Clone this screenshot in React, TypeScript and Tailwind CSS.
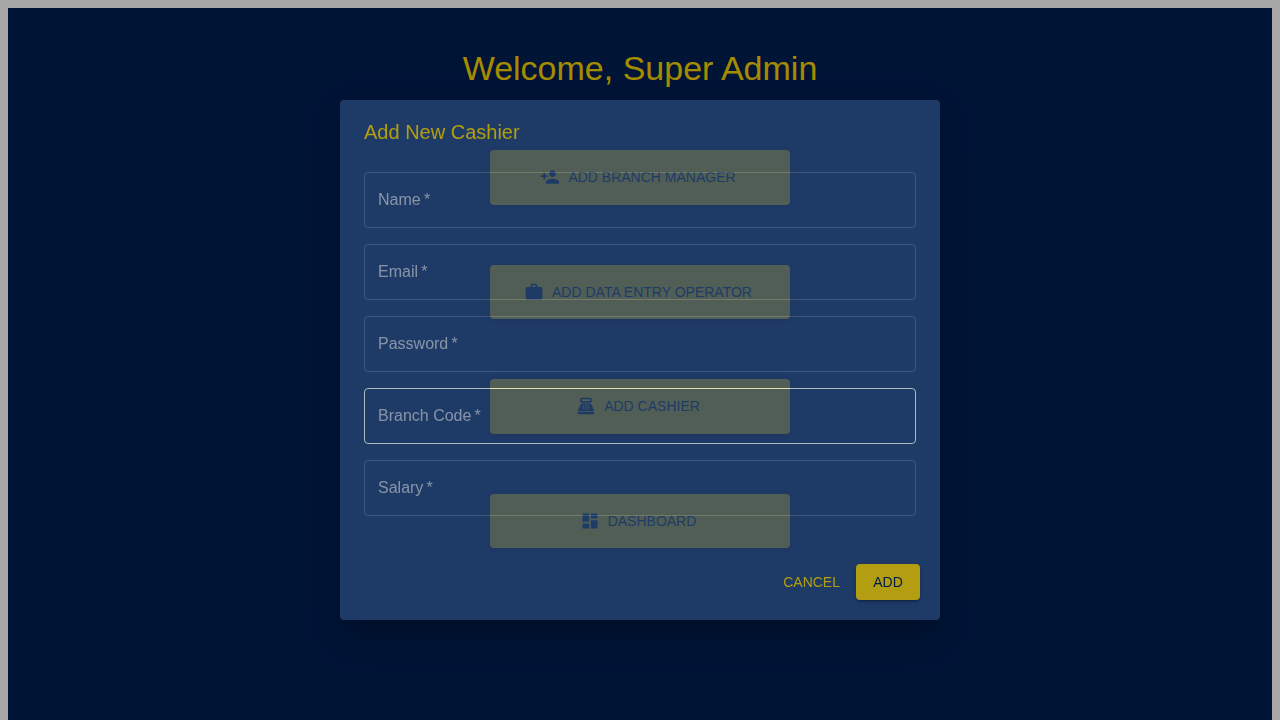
import { useState } from 'react';
import type { FormEvent } from 'react';
import type { IconType } from 'react-icons';
import { MdDashboard, MdPersonAdd, MdPointOfSale, MdWork } from 'react-icons/md';

const actions: { label: string; icon: IconType }[] = [
  { label: 'Add Branch Manager', icon: MdPersonAdd },
  { label: 'Add Data Entry Operator', icon: MdWork },
  { label: 'Add Cashier', icon: MdPointOfSale },
  { label: 'Dashboard', icon: MdDashboard },
];

const raised =
  'shadow-[0_3px_1px_-2px_rgba(0,0,0,0.2),0_2px_2px_0_rgba(0,0,0,0.14),0_1px_5px_0_rgba(0,0,0,0.12)]';

type FieldProps = { id: string; label: string; type?: string; active?: boolean };

function Field({ id, label, type = 'text', active = false }: FieldProps) {
  const [value, setValue] = useState('');
  return (
    <div className="relative">
      <input
        id={id}
        type={type}
        required
        value={value}
        onChange={(e) => setValue(e.target.value)}
        className={`block h-14 w-full rounded border bg-transparent px-[13px] text-base text-white outline-none hover:border-white focus:border-[#ffd700] ${
          active ? 'border-white' : 'border-white/23'
        }`}
      />
      {value === '' && (
        <label
          htmlFor={id}
          className="pointer-events-none absolute inset-y-0 left-3.5 flex items-center text-base text-white/70"
        >
          {label}&thinsp;*
        </label>
      )}
    </div>
  );
}

function CashierDialog() {
  const submit = (e: FormEvent) => e.preventDefault();
  return (
    <div className="fixed inset-0 flex items-center justify-center p-8 opacity-70">
      <form
        role="dialog"
        aria-labelledby="dialog-title"
        noValidate
        onSubmit={submit}
        className="w-full max-w-[600px] rounded bg-[#2b4a7b] shadow-[0_11px_15px_-7px_rgba(0,0,0,0.2),0_24px_38px_3px_rgba(0,0,0,0.14),0_9px_46px_8px_rgba(0,0,0,0.12)]"
      >
        <h2 id="dialog-title" className="px-6 py-4 text-xl leading-8 text-[#ffd700]">
          Add New Cashier
        </h2>
        <div className="flex flex-col gap-4 px-6 pt-2 pb-7">
          <Field id="name" label="Name" />
          <Field id="email" label="Email" type="email" />
          <Field id="password" label="Password" type="password" />
          <Field id="branch-code" label="Branch Code" active />
          <Field id="salary" label="Salary" type="number" />
        </div>
        <div className="flex justify-end gap-2 p-5">
          <button type="button" className="h-9 rounded px-2 text-sm text-[#ffd700] uppercase">
            Cancel
          </button>
          <button
            type="submit"
            className={`h-9 min-w-16 rounded bg-[#ffd700] px-4 text-sm text-[#001f54] uppercase ${raised}`}
          >
            Add
          </button>
        </div>
      </form>
    </div>
  );
}

export default function App() {
  return (
    <div className="bg-white px-2 pt-2 font-['Liberation_Sans',Arial,sans-serif]">
      <main className="flex min-h-[calc(100vh-8px)] flex-col items-center gap-15 bg-[#001f54] px-6 pt-10">
        <h1 className="pb-0.5 text-center text-[34px] leading-10 text-[#ffd700]">Welcome, Super Admin</h1>
        <div className="grid h-[398px] w-full max-w-[300px] grid-rows-4 gap-15">
          {actions.map(({ label, icon: Icon }) => (
            <button
              key={label}
              type="button"
              className={`flex items-center justify-center gap-2 rounded bg-[#ffd700] pr-4 pl-3 text-sm text-[#001f54] uppercase ${raised}`}
            >
              <Icon className="size-5" aria-hidden="true" />
              {label}
            </button>
          ))}
        </div>
      </main>
      <div className="fixed inset-0 bg-black/35" />
      <CashierDialog />
    </div>
  );
}
